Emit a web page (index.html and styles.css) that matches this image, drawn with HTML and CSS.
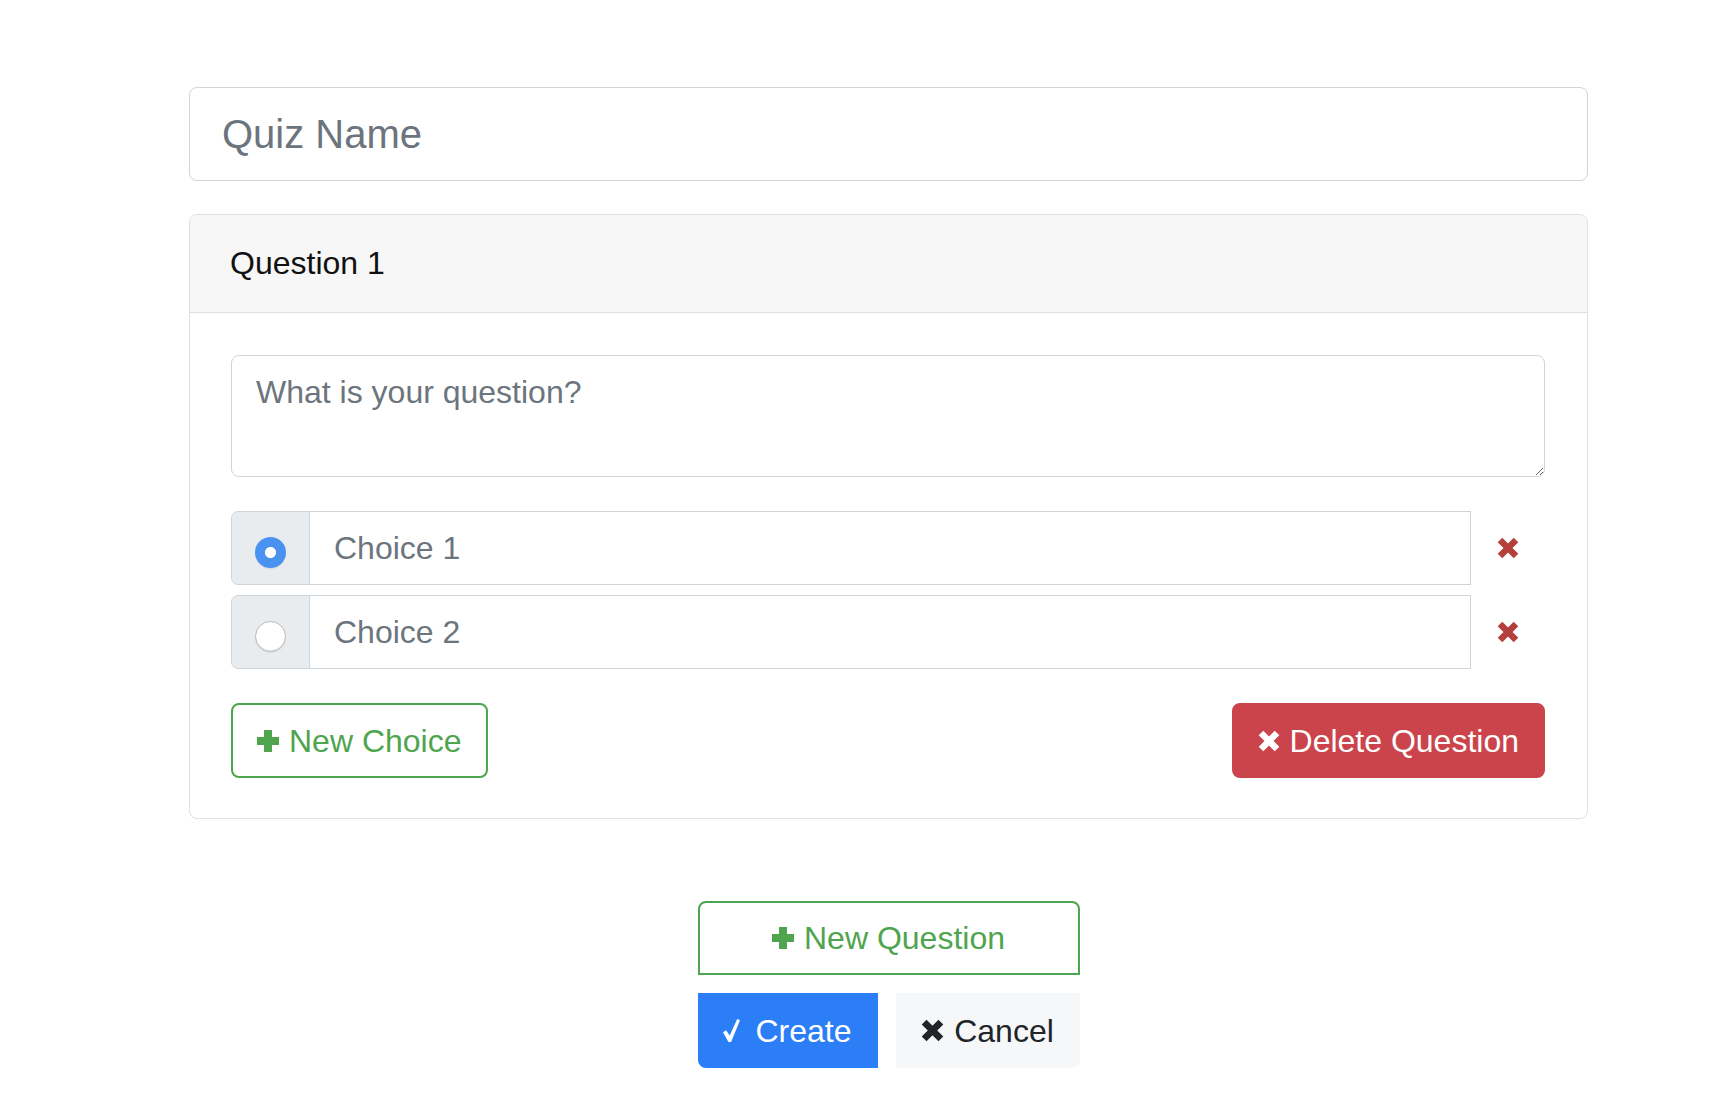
FILE: index.html
```html
<!DOCTYPE html>
<html lang="en">
<head>
<meta charset="utf-8">
<title>New Quiz</title>
<link rel="stylesheet" href="styles.css">
</head>
<body>
<div class="page">
  <input class="quiz-name" type="text" placeholder="Quiz Name">

  <div class="card">
    <div class="card-header">Question 1</div>
    <div class="card-body">
      <textarea class="question" rows="2" placeholder="What is your question?"></textarea>

      <div class="choices">
        <div class="choice-row">
          <div class="input-group">
            <div class="addon"><input class="radio" type="radio" name="answer" checked></div>
            <input class="choice-input" type="text" placeholder="Choice 1">
          </div>
          <button class="remove" type="button" aria-label="Remove choice">
            <svg class="icon-x" viewBox="0 0 22 22" width="22" height="22"><path d="M3 3L19 19M19 3L3 19" stroke="currentColor" stroke-width="6.5" fill="none"/></svg>
          </button>
        </div>
        <div class="choice-row">
          <div class="input-group">
            <div class="addon"><input class="radio" type="radio" name="answer"></div>
            <input class="choice-input" type="text" placeholder="Choice 2">
          </div>
          <button class="remove" type="button" aria-label="Remove choice">
            <svg class="icon-x" viewBox="0 0 22 22" width="22" height="22"><path d="M3 3L19 19M19 3L3 19" stroke="currentColor" stroke-width="6.5" fill="none"/></svg>
          </button>
        </div>
      </div>

      <div class="card-actions">
        <button class="btn btn-outline-success" type="button">
          <svg class="icon-plus" viewBox="0 0 22 22" width="22" height="22"><path d="M7 0h8v7h7v8h-7v7h-8v-7H0V7h7z" fill="currentColor"/></svg>
          <span>New Choice</span>
        </button>
        <button class="btn btn-danger" type="button">
          <svg class="icon-x" viewBox="0 0 22 22" width="22" height="22"><path d="M3 3L19 19M19 3L3 19" stroke="currentColor" stroke-width="6.5" fill="none"/></svg>
          <span>Delete Question</span>
        </button>
      </div>
    </div>
  </div>

  <div class="footer-actions">
    <button class="btn btn-outline-success new-question" type="button">
      <svg class="icon-plus" viewBox="0 0 22 22" width="22" height="22"><path d="M7 0h8v7h7v8h-7v7h-8v-7H0V7h7z" fill="currentColor"/></svg>
      <span>New Question</span>
    </button>
    <div class="final-row">
      <button class="btn btn-primary create" type="button">
        <svg class="icon-check" viewBox="0 0 17 23" width="17" height="23"><path d="M0 13.2L3.1 11.2L6.7 16.4L14.2 0L17 1.3L8.1 23H5.4Z" fill="currentColor"/></svg>
        <span>Create</span>
      </button>
      <button class="btn btn-light cancel" type="button">
        <svg class="icon-x" viewBox="0 0 22 22" width="23" height="23"><path d="M3 3L19 19M19 3L3 19" stroke="currentColor" stroke-width="6.5" fill="none"/></svg>
        <span>Cancel</span>
      </button>
    </div>
  </div>
</div>
</body>
</html>
```

FILE: styles.css
```css
* {
  box-sizing: border-box;
}

html, body {
  margin: 0;
  background: #fff;
}

body {
  font-family: "Liberation Sans", Arial, Helvetica, sans-serif;
  color: #212529;
}

.page {
  width: 1399px;
  margin-left: 189px;
  padding-top: 87px;
  padding-bottom: 40px;
}

input, textarea, button {
  font-family: inherit;
}

::placeholder {
  color: #6c757d;
  opacity: 1;
}

.quiz-name {
  display: block;
  width: 100%;
  height: 94px;
  margin: 0;
  padding: 0 32px;
  border: 1px solid #ced4da;
  border-radius: 8px;
  font-size: 40px;
  color: #495057;
  outline: none;
}

.card {
  margin-top: 33px;
  border: 1px solid #dfdfdf;
  border-radius: 8px;
  overflow: hidden;
}

.card-header {
  height: 98px;
  line-height: 97px;
  padding: 0 40px;
  background: #f7f7f7;
  border-bottom: 1px solid #dfdfdf;
  font-size: 32px;
  color: #111;
}

.card-body {
  padding: 42px 42px 40px 41px;
}

.question {
  display: block;
  width: 100%;
  height: 122px;
  margin: 0;
  padding: 12px 24px;
  border: 1px solid #ced4da;
  border-radius: 8px;
  font-size: 32px;
  line-height: 48px;
  color: #495057;
  outline: none;
  resize: vertical;
}

.choices {
  margin-top: 34px;
  display: flex;
  flex-direction: column;
  gap: 10px;
}

.choice-row {
  display: grid;
  grid-template-columns: 1fr 74px;
  align-items: center;
}

.input-group {
  display: flex;
  height: 74px;
}

.addon {
  width: 79px;
  flex: none;
  display: flex;
  justify-content: center;
  align-items: center;
  background: #e9ecef;
  border: 1px solid #ced4da;
  border-radius: 7px 0 0 7px;
}

.radio {
  appearance: none;
  -webkit-appearance: none;
  width: 31px;
  height: 31px;
  margin: 8px 0 0 0;
  border-radius: 50%;
  border: 1px solid #b9b9b9;
  background: #fff;
  box-shadow: inset 0 -1px 1px rgba(0, 0, 0, 0.08), 0 1px 1px rgba(0, 0, 0, 0.06);
  outline: none;
}

.radio:checked {
  border: none;
  background: radial-gradient(circle, #fff 0 5.2px, #4a92f0 5.9px);
  box-shadow: 0 1px 1px rgba(0, 0, 0, 0.08);
}

.choice-input {
  flex: 1;
  min-width: 0;
  margin: 0;
  padding: 0 24px;
  border: 1px solid #ced4da;
  border-left: none;
  border-radius: 0;
  font-size: 32px;
  color: #495057;
  outline: none;
}

.remove {
  justify-self: center;
  display: flex;
  align-items: center;
  justify-content: center;
  padding: 0;
  border: none;
  background: none;
  color: #b4403e;
  width: 30px;
  height: 30px;
}

.card-actions {
  margin-top: 34px;
  display: flex;
  justify-content: space-between;
  align-items: stretch;
}

.btn {
  display: inline-flex;
  align-items: center;
  justify-content: center;
  gap: 10px;
  height: 75px;
  margin: 0;
  padding: 0 24px;
  border: 2px solid transparent;
  border-radius: 8px;
  font-size: 32px;
  line-height: 1;
  cursor: pointer;
}

.btn svg {
  flex: none;
  display: block;
}

.btn-outline-success {
  background: #fff;
  color: #4ea54e;
  border-color: #4ea54e;
}

.btn-danger {
  background: #cc444b;
  border-color: #cc444b;
  color: #fff;
}

.footer-actions {
  width: 382px;
  margin: 82px auto 0;
  display: flex;
  flex-direction: column;
  gap: 18px;
}

.new-question {
  width: 100%;
  height: 74px;
  border-radius: 8px 8px 0 0;
}

.final-row {
  display: flex;
  justify-content: space-between;
}

.create {
  height: 75px;
  width: 180px;
  gap: 15px;
  background: #2b7ef6;
  border-color: #2b7ef6;
  color: #fff;
  border-radius: 0 0 0 8px;
}

.cancel {
  height: 75px;
  width: 184px;
  background: #f6f7f9;
  border-color: #f6f7f9;
  color: #212529;
  border-radius: 0 0 8px 0;
}
```
